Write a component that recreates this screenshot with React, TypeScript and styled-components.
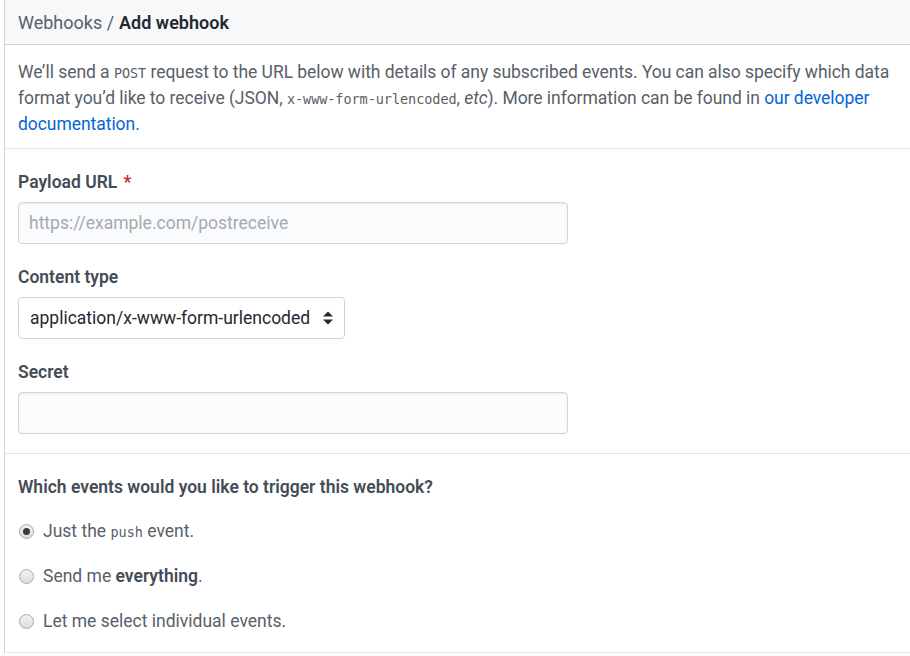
import React from "react";
import styled, { createGlobalStyle } from "styled-components";

const Global = createGlobalStyle`
  html, body { margin: 0; padding: 0; background: #fff; }
  body {
    font-family: Roboto, "Noto Sans", "Liberation Sans", sans-serif;
    color: #24292e;
    -webkit-font-smoothing: antialiased;
  }
  * { box-sizing: border-box; }
`;

const Page = styled.div`
  margin-left: 4px;
  border-left: 1px solid #d1d5da;
  width: 906px;
`;

const Header = styled.div`
  height: 45px;
  background: #f6f8fa;
  border-bottom: 1px solid #d1d5da;
  padding: 0 13px;
  display: flex;
  align-items: center;
  font-size: 18px;
  color: #586069;
`;

const Crumb = styled.strong`
  color: #24292e;
  font-weight: 600;
  margin-left: 5px;
`;

const Section = styled.div<{ $pt?: number; $pb?: number }>`
  padding: ${(p) => p.$pt ?? 20}px 13px ${(p) => p.$pb ?? 19}px;
  border-bottom: 1px solid #e1e4e8;
`;

const Intro = styled.p`
  margin: 0;
  font-size: 17.5px;
  line-height: 26px;
  letter-spacing: -0.05px;
  color: #586069;
`;

const Code = styled.code`
  font-family: "DejaVu Sans Mono", "Liberation Mono", monospace;
  font-size: 13.5px;
  line-height: 1;
`;

const Link = styled.a`
  color: #0366d6;
  text-decoration: none;
`;

const Field = styled.div`
  display: flex;
  flex-direction: column;
  gap: 7px;
  & + & { margin-top: 20px; }
`;

const Label = styled.label`
  font-size: 17.5px;
  line-height: 26px;
  font-weight: 600;
  color: #444d56;
`;

const Req = styled.span`
  color: #cb2431;
  margin-left: 2px;
`;

const Input = styled.input<{ $width: number }>`
  width: ${(p) => p.$width}px;
  height: 42px;
  padding: 0 10px;
  font-family: inherit;
  font-size: 17.5px;
  color: #24292e;
  background: #fafbfc;
  border: 1px solid #d1d5da;
  border-radius: 4px;
  box-shadow: inset 0 1px 2px rgba(27, 31, 35, 0.075);
  outline: none;
  &::placeholder { color: #a3aab1; }
`;

const SelectBox = styled.div`
  width: 327px;
  height: 42px;
  padding: 0 10px 0 11px;
  display: flex;
  align-items: center;
  justify-content: space-between;
  background: #fff;
  border: 1px solid #d1d5da;
  border-radius: 4px;
  font-size: 17.5px;
  color: #24292e;
`;

const Heading = styled.div`
  font-size: 17.5px;
  line-height: 26px;
  font-weight: 600;
  color: #444d56;
  margin-bottom: 18px;
`;

const RadioList = styled.div`
  display: flex;
  flex-direction: column;
  gap: 19px;
`;

const RadioRow = styled.label`
  display: flex;
  align-items: center;
  gap: 9px;
  height: 26px;
  font-size: 17.5px;
  line-height: 26px;
  color: #586069;
`;

const Radio = styled.span<{ $checked?: boolean }>`
  width: 15px;
  height: 15px;
  margin-left: 1px;
  border-radius: 50%;
  border: 1px solid #a9a9a9;
  background: linear-gradient(#f2f2f2, #dcdcdc);
  display: flex;
  align-items: center;
  justify-content: center;
  flex: none;
  &::after {
    content: "";
    width: 7px;
    height: 7px;
    border-radius: 50%;
    background: ${(p) => (p.$checked ? "#3c3c3c" : "transparent")};
  }
`;

const Strong = styled.strong`
  font-weight: 600;
  color: #444d56;
`;

const Arrows = () => (
  <svg width="12" height="16" viewBox="0 0 12 16" aria-hidden>
    <path d="M1 6.5 L6 1.5 L11 6.5 Z" fill="#24292e" />
    <path d="M1 9.5 L6 14.5 L11 9.5 Z" fill="#24292e" />
  </svg>
);

export default function App() {
  return (
    <>
      <Global />
      <Page>
        <Header>
          Webhooks /<Crumb>Add webhook</Crumb>
        </Header>
        <Section $pt={14} $pb={11}>
          <Intro>
            We’ll send a <Code>POST</Code> request to the URL below with details of any subscribed
            events. You can also specify which data format you’d like to receive (JSON,{" "}
            <Code>x-www-form-urlencoded</Code>, <em>etc</em>). More information can be found in{" "}
            <Link href="#">our developer documentation</Link>.
          </Intro>
        </Section>
        <Section $pt={20} $pb={19}>
          <Field>
            <Label>
              Payload URL <Req>*</Req>
            </Label>
            <Input $width={550} placeholder="https://example.com/postreceive" />
          </Field>
          <Field>
            <Label>Content type</Label>
            <SelectBox>
              <span>application/x-www-form-urlencoded</span>
              <Arrows />
            </SelectBox>
          </Field>
          <Field>
            <Label>Secret</Label>
            <Input $width={550} />
          </Field>
        </Section>
        <Section $pt={20} $pb={18}>
          <Heading>Which events would you like to trigger this webhook?</Heading>
          <RadioList>
            <RadioRow>
              <Radio $checked />
              <span>
                Just the <Code>push</Code> event.
              </span>
            </RadioRow>
            <RadioRow>
              <Radio />
              <span>
                Send me <Strong>everything</Strong>.
              </span>
            </RadioRow>
            <RadioRow>
              <Radio />
              <span>Let me select individual events.</span>
            </RadioRow>
          </RadioList>
        </Section>
      </Page>
    </>
  );
}
